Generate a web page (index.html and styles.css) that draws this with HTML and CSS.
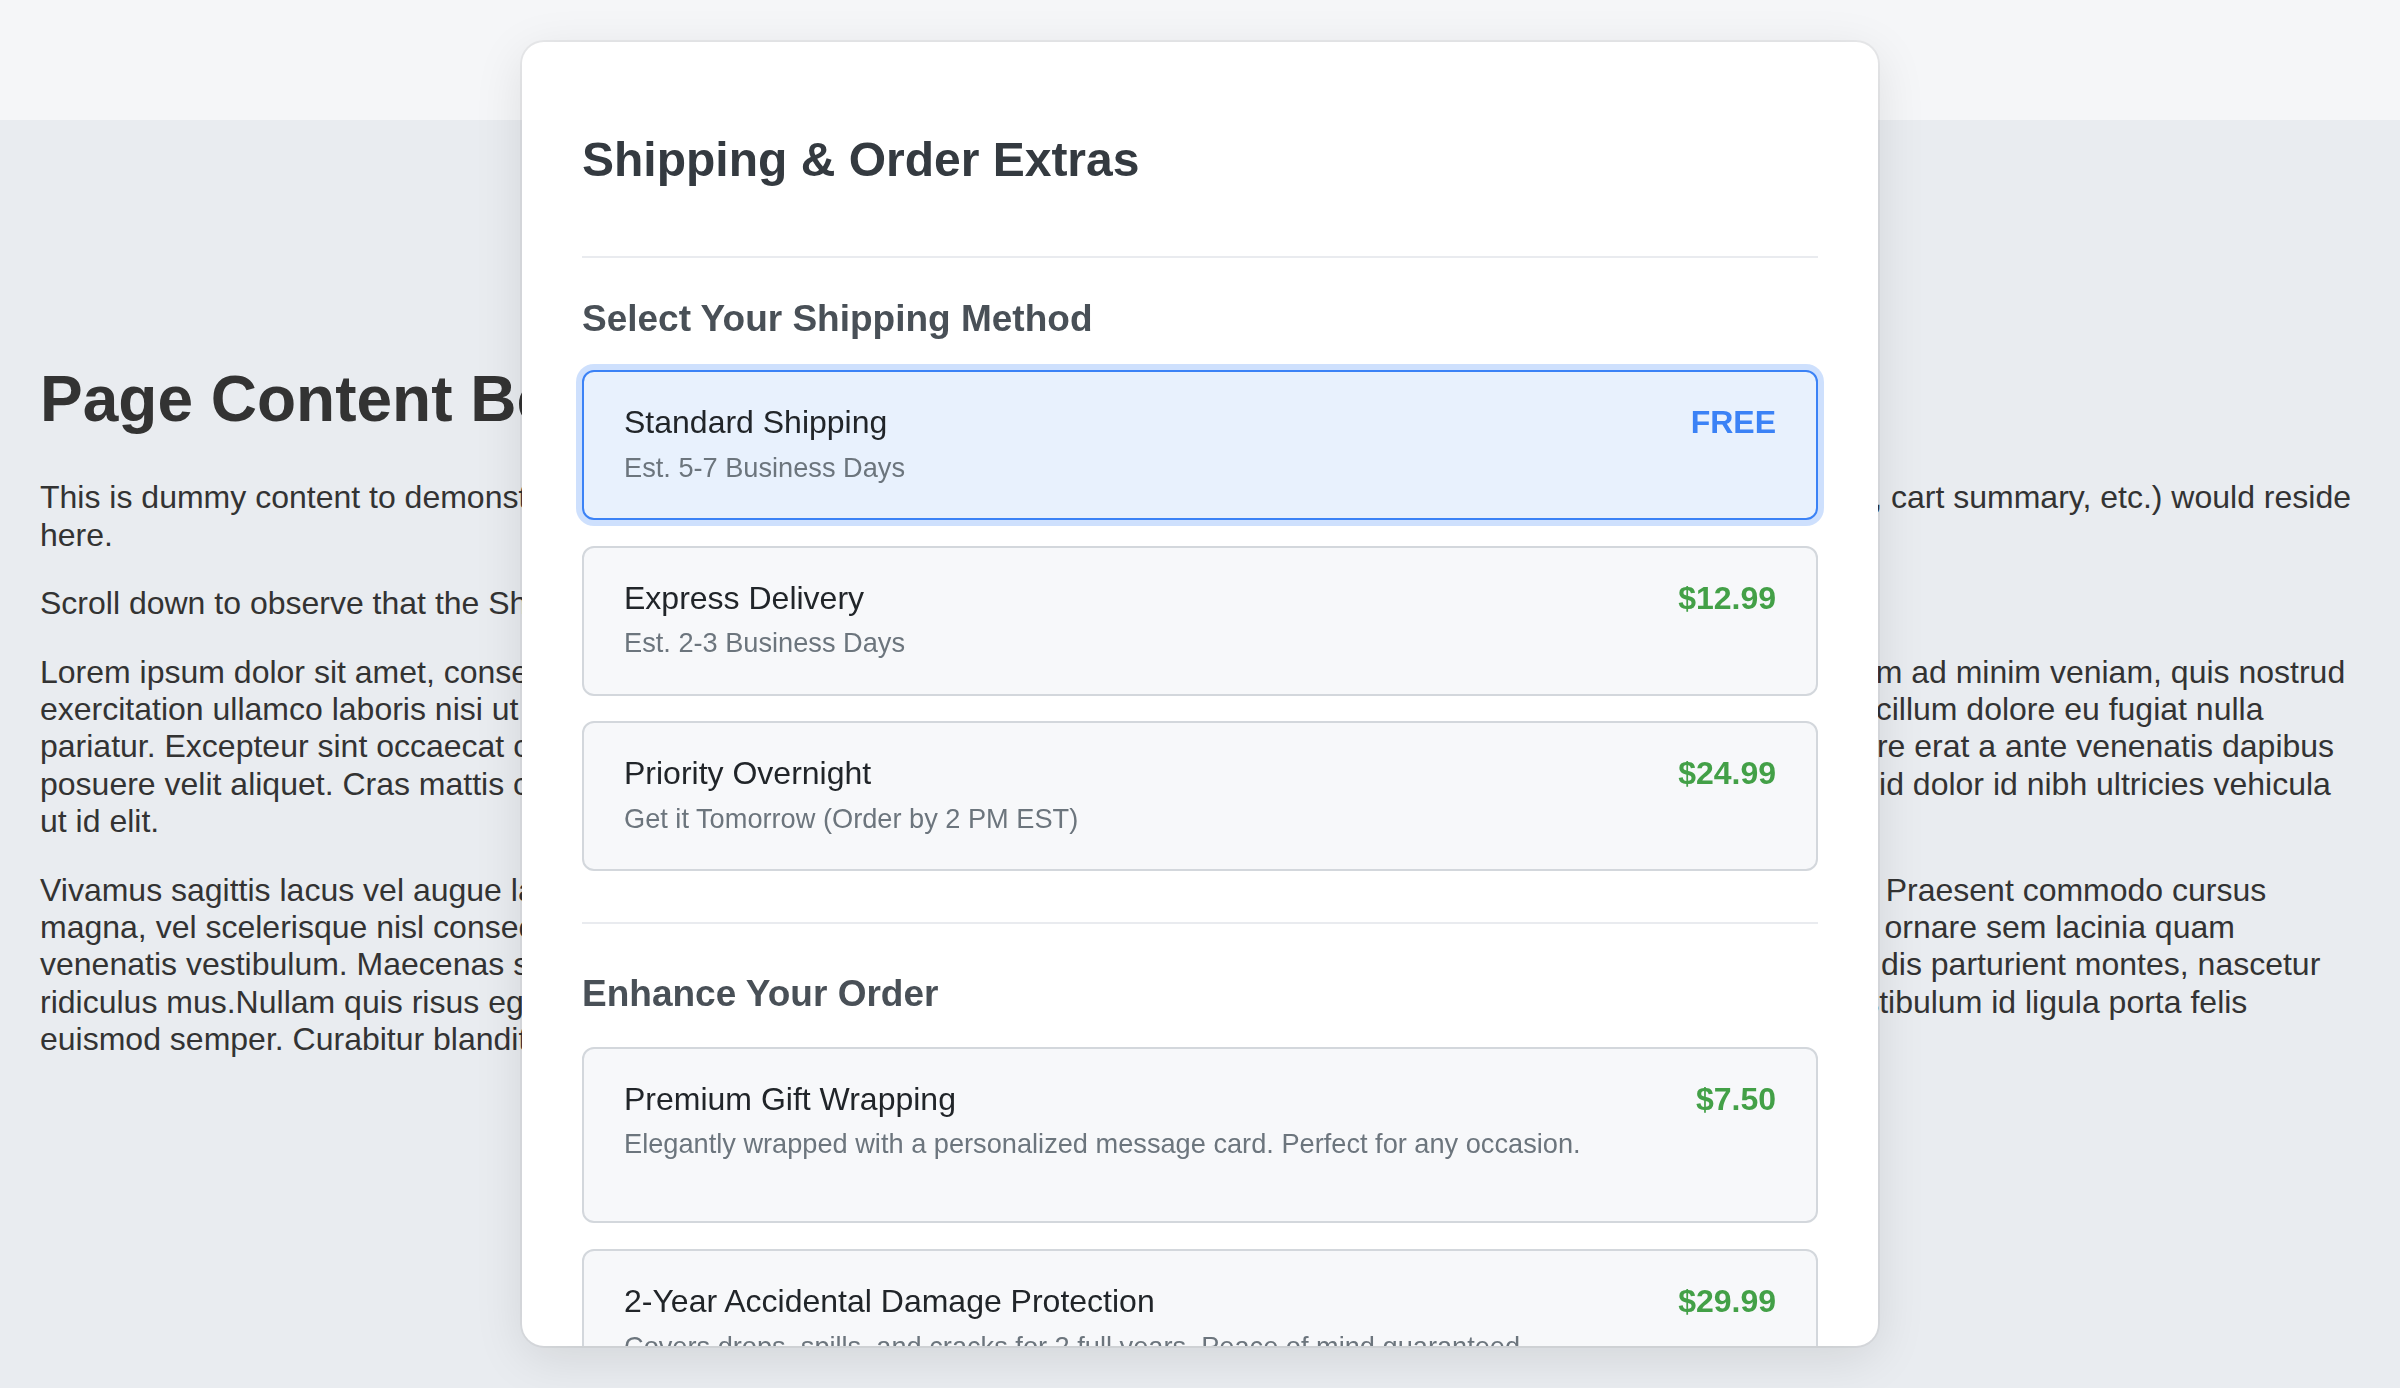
FILE: index.html
```html
<!DOCTYPE html>
<html lang="en">
<head>
<meta charset="utf-8">
<title>Shipping &amp; Order Extras</title>
<link rel="stylesheet" href="styles.css">
</head>
<body>
<header class="site-header"></header>
<main class="page">
  <h1 class="page-title">Page Content Below</h1>
  <p>This is dummy content to demonstrate the page layout. The main checkout form (customer details, shipping info, payment options, cart summary, etc.) would reside here.</p>
  <p>Scroll down to observe that the Shipping &amp; Order Extras modal stays fixed.</p>
  <p>Lorem ipsum dolor sit amet, consectetur adipiscing elit, sed do eiusmod tempor incididunt ut labore et dolore magna aliqua. Ut enim ad minim veniam, quis nostrud exercitation ullamco laboris nisi ut aliquip ex ea commodo consequat. Duis aute irure dolor in reprehenderit in voluptate velit esse cillum dolore eu fugiat nulla pariatur. Excepteur sint occaecat cupidatat non proident, sunt in culpa qui officia deserunt mollit anim id est laborum. Fusce posuere erat a ante venenatis dapibus posuere velit aliquet. Cras mattis consectetur purus sit amet fermentum. Sed ullamcorper nulla non metus, auctor fringilla. Nullam id dolor id nibh ultricies vehicula ut id elit.</p>
  <p>Vivamus sagittis lacus vel augue laoreet rutrum faucibus dolor auctor. Cras justo odio, dapibus ac facilisis in, egestas eget massa. Praesent commodo cursus magna, vel scelerisque nisl consectetur et. Etiam porta sem malesuada magna mollis euismod. Donec eu leo quam. Pellentesque ornare sem lacinia quam venenatis vestibulum. Maecenas sed diam eget risus varius blandit sit amet non magna. Cum sociis natoque penatibus et magnis dis parturient montes, nascetur ridiculus mus.Nullam quis risus eget urna mollis ornare vel eu leo. Nulla vitae elit libero, a pharetra augue. Etiam sed odio dui. Vestibulum id ligula porta felis euismod semper. Curabitur blandit tempus porttitor.</p>
</main>

<div class="modal" role="dialog" aria-labelledby="modal-title">
  <div class="modal-header">
    <h2 class="modal-title" id="modal-title">Shipping &amp; Order Extras</h2>
  </div>

  <section class="modal-section">
    <h3 class="section-title">Select Your Shipping Method</h3>
    <div class="option-list">
      <div class="option option--selected">
        <div class="option-info">
          <div class="option-name">Standard Shipping</div>
          <div class="option-desc">Est. 5-7 Business Days</div>
        </div>
        <div class="option-price option-price--free">FREE</div>
      </div>
      <div class="option">
        <div class="option-info">
          <div class="option-name">Express Delivery</div>
          <div class="option-desc">Est. 2-3 Business Days</div>
        </div>
        <div class="option-price">$12.99</div>
      </div>
      <div class="option">
        <div class="option-info">
          <div class="option-name">Priority Overnight</div>
          <div class="option-desc">Get it Tomorrow (Order by 2 PM EST)</div>
        </div>
        <div class="option-price">$24.99</div>
      </div>
    </div>
  </section>

  <section class="modal-section modal-section--extras">
    <h3 class="section-title">Enhance Your Order</h3>
    <div class="option-list option-list--extras">
      <div class="option option--extra">
        <div class="option-info">
          <div class="option-name">Premium Gift Wrapping</div>
          <div class="option-desc">Elegantly wrapped with a personalized message card. Perfect for any occasion.</div>
        </div>
        <div class="option-price">$7.50</div>
      </div>
      <div class="option option--extra">
        <div class="option-info">
          <div class="option-name">2-Year Accidental Damage Protection</div>
          <div class="option-desc">Covers drops, spills, and cracks for 2 full years. Peace of mind guaranteed.</div>
        </div>
        <div class="option-price">$29.99</div>
      </div>
    </div>
  </section>
</div>
</body>
</html>
```

FILE: styles.css
```css
* {
  box-sizing: border-box;
}

html,
body {
  margin: 0;
  padding: 0;
}

body {
  font-family: "Liberation Sans", Arial, Helvetica, sans-serif;
  font-size: 32px;
  line-height: 37.4px;
  color: #333333;
  background: #e9ecf0;
  min-height: 100vh;
}

.site-header {
  height: 120px;
  background: #f5f6f8;
}

.page {
  padding: 200px 40px 40px;
}

.page-title {
  font-size: 64px;
  line-height: 1.15;
  font-weight: bold;
  margin: 42.9px 0;
  color: #333333;
}

.page p {
  margin: 31px 0;
}

/* Modal */
.modal {
  position: fixed;
  inset: 0;
  margin: auto;
  width: 1356px;
  height: 94vh;
  padding: 0 60px;
  background: #ffffff;
  border-radius: 22px;
  box-shadow: 0 0 0 2px rgba(0, 0, 0, 0.05), 0 12px 50px rgba(0, 0, 0, 0.10);
  overflow: hidden;
  font-size: 32px;
  line-height: 1.15;
}

.modal-header {
  padding: 90.2px 0 69.3px;
  border-bottom: 2px solid #e9ebef;
}

.modal-title {
  margin: 0;
  font-size: 48px;
  line-height: 1.15;
  font-weight: bold;
  color: #343a40;
}

.modal-section {
  padding-top: 39.5px;
}

.modal-section--extras {
  margin-top: 50.6px;
  padding-top: 48.9px;
  border-top: 2px solid #e9ebef;
}

.section-title {
  margin: 0 0 30px;
  font-size: 37px;
  line-height: 1.15;
  font-weight: bold;
  color: #495057;
}

.modal-section--extras .section-title {
  margin-bottom: 31.5px;
}

.option-list {
  display: flex;
  flex-direction: column;
  gap: 25.25px;
}

.option-list--extras {
  gap: 26px;
}

.option {
  display: flex;
  justify-content: space-between;
  align-items: flex-start;
  gap: 24px;
  padding: 32px 40px 35px;
  background: #f7f8fa;
  border: 2px solid #d3d7dc;
  border-radius: 12px;
}

.option--extra {
  padding-bottom: 61px;
}

.option--selected {
  background: #e8f1fd;
  border-color: #3b82f6;
  box-shadow: 0 0 0 6px rgba(59, 130, 246, 0.25);
}

.option-name {
  font-size: 32px;
  line-height: 1.15;
  color: #212529;
}

.option-desc {
  margin-top: 11px;
  font-size: 27.2px;
  line-height: 1.15;
  color: #6c757d;
}

.option-price {
  font-size: 32px;
  line-height: 1.15;
  font-weight: bold;
  color: #43a047;
  white-space: nowrap;
}

.option-price--free {
  color: #3b82f6;
}
```
